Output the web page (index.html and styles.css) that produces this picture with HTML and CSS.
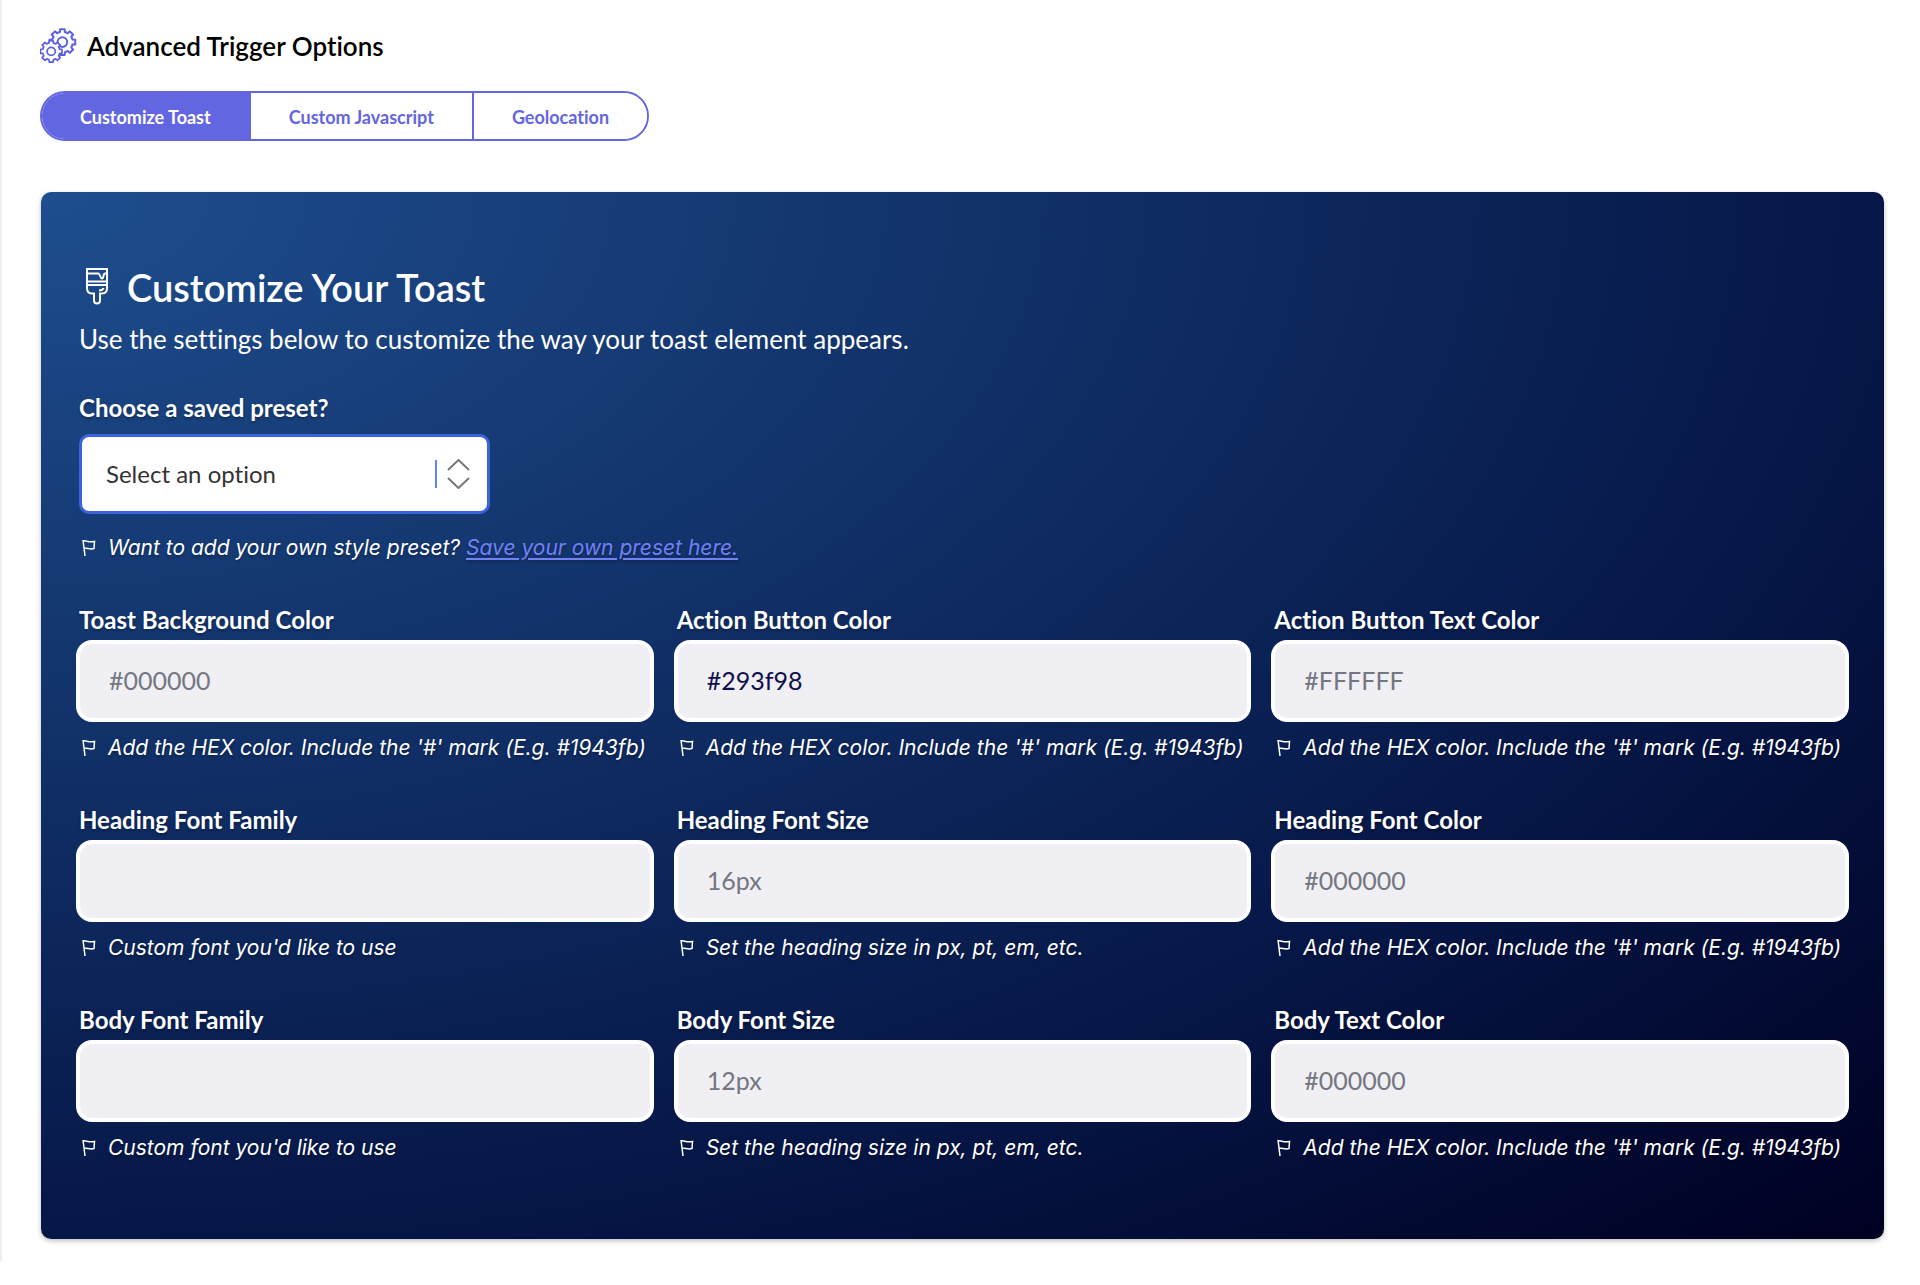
FILE: index.html
```html
<!DOCTYPE html>
<html lang="en">
<head>
<meta charset="utf-8">
<meta name="viewport" content="width=device-width, initial-scale=1">
<title>Advanced Trigger Options</title>
<link rel="stylesheet" href="styles.css">
</head>
<body>
<svg class="sprite" aria-hidden="true">
  <symbol id="flag" viewBox="0 0 14 18">
    <path d="M1 1L3 17M1 2C4 1 6 4 12.500 2.500L12 9.500C7 11 5 8 2 9.500"/>
  </symbol>
  <symbol id="gear" viewBox="-15 -15 30 30">
    <path d="M10 -2.500L12.800 -2.300V2.300L10 2.500A10.300 10.300 0 0 1 8.800 5.300L10.700 7.400L7.400 10.700L5.300 8.800A10.300 10.300 0 0 1 2.500 10L2.300 12.800H-2.300L-2.500 10A10.300 10.300 0 0 1 -5.300 8.800L-7.400 10.700L-10.700 7.400L-8.800 5.300A10.300 10.300 0 0 1 -10 2.500L-12.800 2.300V-2.300L-10 -2.500A10.300 10.300 0 0 1 -8.800 -5.300L-10.700 -7.400L-7.400 -10.700L-5.300 -8.800A10.300 10.300 0 0 1 -2.500 -10L-2.300 -12.800H2.300L2.500 -10A10.300 10.300 0 0 1 5.300 -8.800L7.400 -10.700L10.700 -7.400L8.800 -5.300A10.300 10.300 0 0 1 10 -2.500Z"/>
    <circle r="4.800"/>
  </symbol>
</svg>
<main class="page">
  <header class="page-header">
    <svg class="gears" viewBox="0 0 37 37" aria-hidden="true">
      <use href="#gear" x="7" y="-1" width="31" height="31"/>
      <use href="#gear" x="-2" y="11" width="26" height="26"/>
    </svg>
    <h1 class="page-title">Advanced Trigger Options</h1>
  </header>
  <nav class="tabs">
    <button type="button" class="tab tab-active">Customize Toast</button>
    <button type="button" class="tab">Custom Javascript</button>
    <button type="button" class="tab">Geolocation</button>
  </nav>
  <form class="panel">
    <div class="panel-heading">
      <svg class="brush" viewBox="0 0 24 38" aria-hidden="true">
        <path d="M2 2H22V21C22 24.500 20 26.500 17 26.500H15V33.500A3 3 0 0 1 9 33.500V26.500H7C4 26.500 2 24.500 2 21ZM2 6.500H13.500C15 6.500 15 11.500 17 11.500S18 6.500 20 6.500H22M2 14.500H22M2 18H22M14 23.500C17 23.500 18 22.500 18.500 21"/>
      </svg>
      <h2 class="panel-title">Customize Your Toast</h2>
    </div>
    <p class="lead">Use the settings below to customize the way your toast element appears.</p>
    <label class="label preset-label" for="preset">Choose a saved preset?</label>
    <div class="preset">
      <select class="select" id="preset"><option>Select an option</option></select>
      <svg class="select-arrows" viewBox="0 0 36 30" aria-hidden="true">
        <path class="bar" d="M1 1V29"/>
        <path class="arrows" d="M13 11L23.500 1L34 11M13 19L23.500 29L34 19"/>
      </svg>
    </div>
    <p class="hint preset-hint"><svg class="flag" aria-hidden="true"><use href="#flag"/></svg><span>Want to add your own style preset? <a class="link" href="#save">Save your own preset here.</a></span></p>
    <div class="fields">
      <div class="field">
        <label class="label" for="toast-bg">Toast Background Color</label>
        <input class="input" id="toast-bg" type="text" placeholder="#000000">
        <p class="hint"><svg class="flag" aria-hidden="true"><use href="#flag"/></svg><span>Add the HEX color. Include the '#' mark (E.g. #1943fb)</span></p>
      </div>
      <div class="field">
        <label class="label" for="action-bg">Action Button Color</label>
        <input class="input" id="action-bg" type="text" value="#293f98">
        <p class="hint"><svg class="flag" aria-hidden="true"><use href="#flag"/></svg><span>Add the HEX color. Include the '#' mark (E.g. #1943fb)</span></p>
      </div>
      <div class="field">
        <label class="label" for="action-text">Action Button Text Color</label>
        <input class="input" id="action-text" type="text" placeholder="#FFFFFF">
        <p class="hint"><svg class="flag" aria-hidden="true"><use href="#flag"/></svg><span>Add the HEX color. Include the '#' mark (E.g. #1943fb)</span></p>
      </div>
      <div class="field">
        <label class="label" for="heading-family">Heading Font Family</label>
        <input class="input" id="heading-family" type="text">
        <p class="hint"><svg class="flag" aria-hidden="true"><use href="#flag"/></svg><span>Custom font you'd like to use</span></p>
      </div>
      <div class="field">
        <label class="label" for="heading-size">Heading Font Size</label>
        <input class="input" id="heading-size" type="text" placeholder="16px">
        <p class="hint"><svg class="flag" aria-hidden="true"><use href="#flag"/></svg><span>Set the heading size in px, pt, em, etc.</span></p>
      </div>
      <div class="field">
        <label class="label" for="heading-color">Heading Font Color</label>
        <input class="input" id="heading-color" type="text" placeholder="#000000">
        <p class="hint"><svg class="flag" aria-hidden="true"><use href="#flag"/></svg><span>Add the HEX color. Include the '#' mark (E.g. #1943fb)</span></p>
      </div>
      <div class="field">
        <label class="label" for="body-family">Body Font Family</label>
        <input class="input" id="body-family" type="text">
        <p class="hint"><svg class="flag" aria-hidden="true"><use href="#flag"/></svg><span>Custom font you'd like to use</span></p>
      </div>
      <div class="field">
        <label class="label" for="body-size">Body Font Size</label>
        <input class="input" id="body-size" type="text" placeholder="12px">
        <p class="hint"><svg class="flag" aria-hidden="true"><use href="#flag"/></svg><span>Set the heading size in px, pt, em, etc.</span></p>
      </div>
      <div class="field">
        <label class="label" for="body-color">Body Text Color</label>
        <input class="input" id="body-color" type="text" placeholder="#000000">
        <p class="hint"><svg class="flag" aria-hidden="true"><use href="#flag"/></svg><span>Add the HEX color. Include the '#' mark (E.g. #1943fb)</span></p>
      </div>
    </div>
  </form>
</main>
</body>
</html>
```
FILE: styles.css
```css
*, *::before, *::after { box-sizing: border-box; }

body {
  margin: 0;
  background: #fff;
  color: #000;
  font-family: Lato, "Liberation Sans", sans-serif;
}

body, button, input, select { font-variant-ligatures: none; }

h1, h2, p { margin: 0; }

.sprite { display: none; }

.page {
  padding: 28px 36px 22px 38px;
  border-left: 2px solid #efeff1;
}

.page-header {
  display: flex;
  align-items: center;
  gap: 10px;
}

.gears {
  width: 37px;
  height: 36px;
  fill: #fff;
  stroke: #5c5fe6;
  stroke-width: 2;
  stroke-linejoin: round;
}

.page-title {
  font-size: 26px;
  line-height: 36px;
  font-weight: 600;
}

.tabs {
  display: inline-flex;
  margin-top: 27px;
  border: 2px solid #6366e1;
  border-radius: 25px;
  overflow: hidden;
  vertical-align: top;
}

.tab {
  height: 46px;
  padding: 2px 38px 0;
  border: 0;
  background: #fff;
  color: #6366e1;
  font-family: inherit;
  font-size: 18px;
  font-weight: 700;
}

.tab + .tab { border-left: 2px solid #6366e1; }

.tab-active {
  background: #6366e1;
  color: #fff;
}

.panel {
  margin-top: 51px;
  margin-left: 1px;
  padding: 71px 38px 77px;
  border-radius: 10px;
  background: radial-gradient(ellipse farthest-corner at 0 0, #1e4e8e, #061747 70%, #000022);
  box-shadow: 0 2px 5px rgba(0, 0, 0, 0.25);
  color: #fff;
}

.panel-heading {
  display: flex;
  align-items: center;
  gap: 18px;
  padding-left: 6px;
}

.brush {
  width: 24px;
  height: 38px;
  margin-bottom: 3px;
  fill: none;
  stroke: #fff;
  stroke-width: 2;
}

.panel-title {
  font-size: 38px;
  line-height: 48px;
  font-weight: 600;
}

.lead {
  margin-top: 12px;
  font-size: 26px;
  line-height: 32px;
}

.label {
  display: block;
  padding-left: 3px;
  font-size: 24px;
  line-height: 32px;
  font-weight: 700;
  text-shadow: 0 2px 3px rgba(0, 0, 0, 0.3);
}

.preset-label {
  margin-top: 37px;
  padding-left: 0;
}

.preset {
  display: grid;
  align-items: center;
  max-width: 411px;
  margin-top: 10px;
}

.select, .select-arrows { grid-area: 1 / 1; }

.select {
  width: 100%;
  height: 80px;
  padding: 0 64px 2px 24px;
  border: 3px solid #3a63dc;
  border-radius: 10px;
  appearance: none;
  background: #fff;
  color: #333;
  font-family: inherit;
  font-size: 24px;
}

.select-arrows {
  justify-self: end;
  width: 36px;
  height: 30px;
  margin-right: 19px;
  fill: none;
  pointer-events: none;
}

.bar { stroke: #5f86f2; stroke-width: 2; }
.arrows { stroke: #777; stroke-width: 2; }

.hint {
  display: flex;
  align-items: center;
  gap: 12px;
  margin-top: 12px;
  padding-left: 6px;
  font-family: Inter, "Liberation Sans", sans-serif;
  font-size: 21px;
  line-height: 28px;
  font-style: italic;
  white-space: nowrap;
  text-shadow: 0 2px 3px rgba(0, 0, 0, 0.3);
}

.preset-hint {
  margin-top: 20px;
  padding-left: 3px;
}

.flag {
  flex: none;
  width: 14px;
  height: 18px;
  fill: none;
  stroke: #fff;
  stroke-width: 1.500;
}

.link {
  color: #7280f5;
  text-underline-offset: 3px;
}

.fields {
  display: grid;
  grid-template-columns: repeat(3, minmax(0, 1fr));
  gap: 42px 20px;
  margin: 42px -3px 0;
}

.input {
  display: block;
  width: 100%;
  height: 82px;
  margin-top: 4px;
  padding: 0 29px 2px;
  border: 4px solid #fff;
  border-radius: 16px;
  background: #f0eff4;
  color: #10104e;
  font-family: inherit;
  font-size: 25px;
}

.input::placeholder {
  color: #747782;
  opacity: 1;
}
```
